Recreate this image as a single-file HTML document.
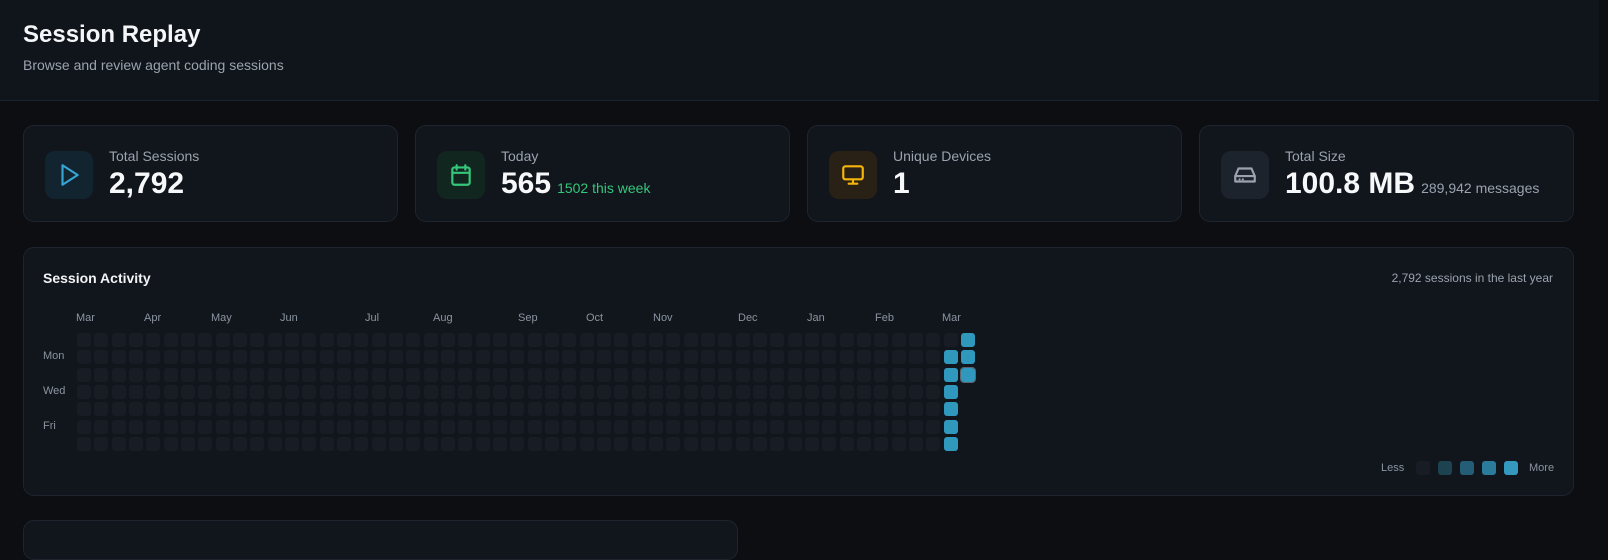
<!DOCTYPE html>
<html><head><meta charset="utf-8"><style>
*{box-sizing:border-box;margin:0;padding:0}
body{width:1608px;height:525px;overflow:hidden;background:#0c0e11;font-family:"Liberation Sans",sans-serif;color:#fff;position:relative}
.hdr{position:absolute;left:0;top:0;width:1599px;height:101px;background:#10141b;border-bottom:1px solid #1c2330}
.hdr h1{position:absolute;left:23px;top:21px;font-size:24px;font-weight:700;color:#f4f6f8}
.hdr p{position:absolute;left:23px;top:57px;font-size:14px;color:#9aa3af}
.card{position:absolute;background:#11151c;border:1px solid #1e2530;border-radius:11px}
.stat{top:125px;width:375px;height:97px}
.ib{position:absolute;left:21px;top:25px;width:48px;height:48px;border-radius:10px;display:flex;align-items:center;justify-content:center}
.lb{position:absolute;left:85px;top:22px;font-size:14px;color:#9aa3af}
.val{position:absolute;left:85px;top:41px;font-size:30px;font-weight:700;color:#f7f8fa;white-space:nowrap}
.val span{font-size:14px;font-weight:400;margin-left:6px}
.t{position:absolute;font-size:11px;color:#8b94a1}
.c{position:absolute;width:14px;height:14px;border-radius:3px;background:#171c25}
</style></head><body>
<div class="hdr"><h1>Session Replay</h1><p>Browse and review agent coding sessions</p></div>

<div class="card stat" style="left:23px">
<div class="ib" style="background:#132431"><svg width="26" height="26" viewBox="0 0 24 24" fill="none" stroke="#35a5d4" stroke-width="2" stroke-linejoin="round"><path d="M6 3l14 9-14 9z"/></svg></div>
<div class="lb">Total Sessions</div><div class="val">2,792</div></div>

<div class="card stat" style="left:415px">
<div class="ib" style="background:#122620"><svg width="26" height="26" viewBox="0 0 24 24" fill="none" stroke="#34c77b" stroke-width="2" stroke-linecap="round"><rect x="4" y="5" width="16" height="16" rx="2"/><path d="M4 10h16M8 3v4M16 3v4"/></svg></div>
<div class="lb">Today</div><div class="val">565<span style="color:#34c77b">1502 this week</span></div></div>

<div class="card stat" style="left:807px">
<div class="ib" style="background:#2a2116"><svg width="26" height="26" viewBox="0 0 24 24" fill="none" stroke="#f5b50b" stroke-width="2" stroke-linecap="round"><rect x="3" y="4" width="18" height="12" rx="2"/><path d="M12 16v4M8 20h8"/></svg></div>
<div class="lb">Unique Devices</div><div class="val">1</div></div>

<div class="card stat" style="left:1199px">
<div class="ib" style="background:#1c232d"><svg width="26" height="26" viewBox="0 0 24 24" fill="none" stroke="#9aa3af" stroke-width="2" stroke-linecap="round" stroke-linejoin="round"><path d="M3 13l3-7h12l3 7v5H3z"/><path d="M3 13h18M7 16h.01M10 16h.01"/></svg></div>
<div class="lb">Total Size</div><div class="val">100.8 MB<span style="color:#9aa3af">289,942 messages</span></div></div>

<div class="card" style="left:23px;top:247px;width:1551px;height:249px">
<div style="position:absolute;left:19px;top:22px;font-size:14px;font-weight:700;color:#f1f3f5">Session Activity</div>
<div style="position:absolute;right:20px;top:23px;font-size:12px;color:#9aa3af">2,792 sessions in the last year</div>
</div>
<div id="g"></div>
<div class="card" style="left:23px;top:520px;width:715px;height:40px"></div>
<script>
var g=document.getElementById('g'),h='';
var months=[['Mar',76],['Apr',144],['May',211],['Jun',280],['Jul',365],['Aug',433],['Sep',518],['Oct',586],['Nov',653],['Dec',738],['Jan',807],['Feb',875],['Mar',942]];
months.forEach(function(m){h+='<div class="t" style="left:'+m[1]+'px;top:312px">'+m[0]+'</div>'});
[['Mon',1],['Wed',3],['Fri',5]].forEach(function(d){h+='<div class="t" style="left:43px;top:'+(333+d[1]*17.33)+'px">'+d[0]+'</div>'});
for(var c=0;c<52;c++)for(var r=0;r<7;r++){
 var bg='#171c25',ex='';
 if(c==50&&r>=1)bg='#3097bd';
 if(c==51){if(r>2)continue;bg='#3097bd';if(r==2)ex='outline:1px solid #5b6570;';}
 h+='<div class="c" style="left:'+(77+c*17.33).toFixed(1)+'px;top:'+(333+r*17.33).toFixed(1)+'px;background:'+bg+';'+ex+'"></div>';
}
h+='<div class="t" style="left:1381px;top:462px">Less</div><div class="t" style="left:1529px;top:462px">More</div>';
['#171c25','#1d4250','#235e76','#2b7c9b','#3498bf'].forEach(function(col,i){h+='<div class="c" style="left:'+(1416+i*22)+'px;top:461px;background:'+col+'"></div>'});
g.innerHTML=h;
</script>
</body></html>
